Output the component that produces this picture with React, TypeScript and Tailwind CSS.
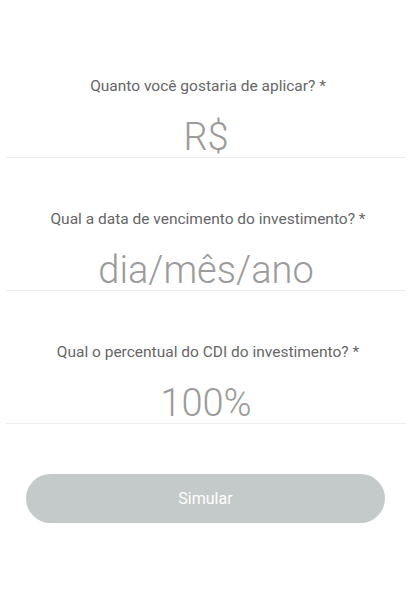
import React from "react";

const fields = [
  { label: "Quanto você gostaria de aplicar? *", placeholder: "R$" },
  { label: "Qual a data de vencimento do investimento? *", placeholder: "dia/mês/ano" },
  { label: "Qual o percentual do CDI do investimento? *", placeholder: "100%" },
];

export default function App() {
  return (
    <div className="w-[416px] h-[601px] bg-white" style={{ fontFamily: "Roboto, 'Open Sans', sans-serif" }}>
      <div className="flex flex-col pt-[76px]">
        {fields.map((f) => (
          <div key={f.label} className="flex flex-col items-center mb-[51px]">
            <label className="text-[15.5px] leading-[20px] text-[#666666]">{f.label}</label>
            <div className="mt-[12px] ml-[6px] mr-[10px] self-stretch h-[50px] border-b border-[#eeeeee] flex items-end justify-center pb-[1px]">
              <span className="text-[38px] leading-none font-light text-[#9b9b9b]">{f.placeholder}</span>
            </div>
          </div>
        ))}
        <div className="pl-[26px] pr-[31px] -mt-[1px]">
          <button className="w-full h-[49px] rounded-full bg-[#c4c9c9] text-white text-[16px]">Simular</button>
        </div>
      </div>
    </div>
  );
}
